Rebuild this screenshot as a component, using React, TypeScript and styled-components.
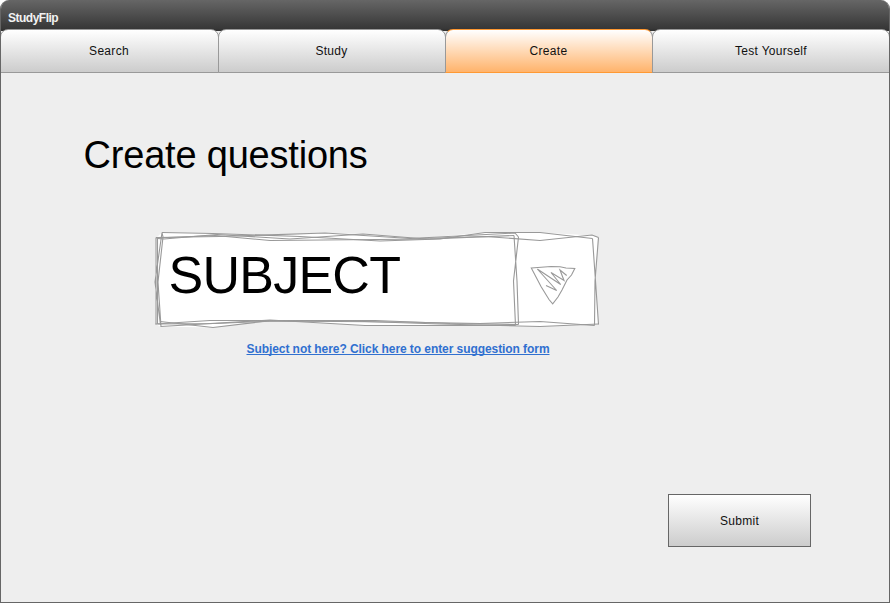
import React from "react";
import styled, { createGlobalStyle } from "styled-components";

const GlobalStyle = createGlobalStyle`
  * { box-sizing: border-box; }
  body { margin: 0; background: #fff; font-family: "Liberation Sans", Arial, sans-serif; }
`;

const Window = styled.div`
  width: 890px;
  height: 603px;
  display: flex;
  flex-direction: column;
  border: 1px solid #666;
  border-top: 0;
  border-radius: 9px 9px 0 0;
  background: #eee;
  overflow: hidden;
`;

const TitleBar = styled.header`
  height: 31px;
  flex: none;
  margin: 0 -1px;
  padding: 11px 0 0 8px;
  background: linear-gradient(#666, #333);
  color: #f2f2f2;
  font-size: 12px;
  font-weight: bold;
  line-height: 15px;
  letter-spacing: -0.5px;
`;

const TabStrip = styled.nav`
  display: grid;
  grid-template-columns: 218px 227px 207px 238px;
  flex: none;
  height: 44px;
  margin: -2px -1px 0;
  background: linear-gradient(#333 2px, #eee 2px);
`;

const Tab = styled.a<{ $active?: boolean }>`
  display: flex;
  justify-content: center;
  align-items: center;
  margin-right: -1px;
  padding-right: 1px;
  border: 1px solid ${(p) => (p.$active ? "#ff9933" : "#999")};
  border-left-color: #999;
  border-right-color: #999;
  border-radius: 8px 8px 0 0;
  background: ${(p) => (p.$active ? "linear-gradient(#fff, #ffb36b)" : "linear-gradient(#fff, #ccc)")};
  color: #111;
  font-size: 12px;
  letter-spacing: 0.3px;

  &:last-child { margin-right: 0; padding-right: 0; }
`;

const Content = styled.main`
  flex: 1;
  display: flex;
  flex-direction: column;
  align-items: flex-start;
`;

const Heading = styled.h1`
  margin: 60px 0 0 82.5px;
  font-size: 38px;
  line-height: 44px;
  font-weight: normal;
  letter-spacing: -0.2px;
  color: #000;
`;

const SubjectSelect = styled.div`
  display: grid;
  width: 450px;
  height: 102px;
  margin: 51px 0 0 151px;
  & > * { grid-area: 1 / 1; }
`;

const SubjectLabel = styled.span`
  padding: 17px 0 0 16.500px;
  font-size: 52px;
  line-height: 60px;
  letter-spacing: -0.75px;
  color: #000;
`;

const SuggestionLink = styled.a`
  margin: 11px 0 0 245.500px;
  color: #3070d0;
  font-size: 12px;
  line-height: 16px;
  font-weight: bold;
  letter-spacing: -0.07px;
  text-decoration: underline;
  text-decoration-skip-ink: none;
`;

const Submit = styled.button`
  width: 143px;
  height: 53px;
  margin: auto 78px 55px auto;
  padding: 0;
  border: 1px solid #666;
  background: linear-gradient(#fff, #ccc);
  color: #111;
  font: 12px "Liberation Sans", Arial, sans-serif;
  letter-spacing: 0.3px;
`;

const tabs = ["Search", "Study", "Create", "Test Yourself"];

function SketchFrame() {
  return (
    <svg width="450" height="102" viewBox="152 228 450 102" fill="none" stroke="#999" strokeWidth="1.1">
      <path
        fill="#fff"
        stroke="none"
        d="M156 238L162 232.500L213 233.500L270 236L325 233L363 234L415 238.500L485 232.500L540 232.500L592 235.500L598 237.500L595 280L598.500 324.500L540 326.500L365 325.500L270 320L213 327.500L160 326.500L156 324L155 282Z"
      />
      {/* top edges */}
      <path d="M162 232.500L213 233.500L300 236.500L380 241L440 239L485 232.500L540 232.500L592.500 238.500" />
      <path d="M156 237.500L220 236.500L325 233L410 238.500L515 233L518.500 237" />
      <path d="M157.500 238.500L164 239L217 234.500L290 239L363 234L420 238.500L485 236.500L540 240.500L592 235L598.500 237.500" />
      <path d="M156 238L215 235.500L270 240.500L430 239L514 235.500" />
      {/* left edges */}
      <path d="M156 237.500L156 324.500M157.500 238L157.500 324M162 232.500L163 237L158 282L161 326.500M162 232.500L155 282L160.500 325" />
      {/* bottom edges */}
      <path d="M155.500 324L210 320.500L375 320.500L450 323.500L518.500 324.500" />
      <path d="M160 321.500L213 327.500L267 321L350 321L440 324L540 326.500L598.500 324" />
      <path d="M160.500 326.500L270 320L365 325.500L515.500 325.500" />
      <path d="M157.500 324L215 323.500L275 321L400 322L480 323.500L540 321.500L594.500 325.500" />
      {/* divider and right edges */}
      <path d="M518.500 237L513.500 281L515.500 325.500M514 235.500L517 281L518.500 324.500" />
      <path d="M592.500 238.500L595.500 281L598.500 324.500M598.500 237.500L595 281L594.500 325.500" />
      {/* drop-down arrow */}
      <path d="M531.300 268L551 266.500L560 266.800L566 268L574.800 268.500L571.500 275L567 280L562 290L558 297L552.700 303.800L549 299.500L541 286.500Z" />
      <path d="M537.300 269L556.700 290.500L546 285.500M537.300 269L560.700 284.500L551 272.500L564 280.500L560 270L566.700 275.500" />
    </svg>
  );
}

export default function App() {
  return (
    <>
      <GlobalStyle />
      <Window>
        <TitleBar>StudyFlip</TitleBar>
        <TabStrip>
          {tabs.map((name) => (
            <Tab key={name} $active={name === "Create"}>{name}</Tab>
          ))}
        </TabStrip>
        <Content>
          <Heading>Create questions</Heading>
          <SubjectSelect>
            <SketchFrame />
            <SubjectLabel>SUBJECT</SubjectLabel>
          </SubjectSelect>
          <SuggestionLink>Subject not here? Click here to enter suggestion form</SuggestionLink>
          <Submit>Submit</Submit>
        </Content>
      </Window>
    </>
  );
}
